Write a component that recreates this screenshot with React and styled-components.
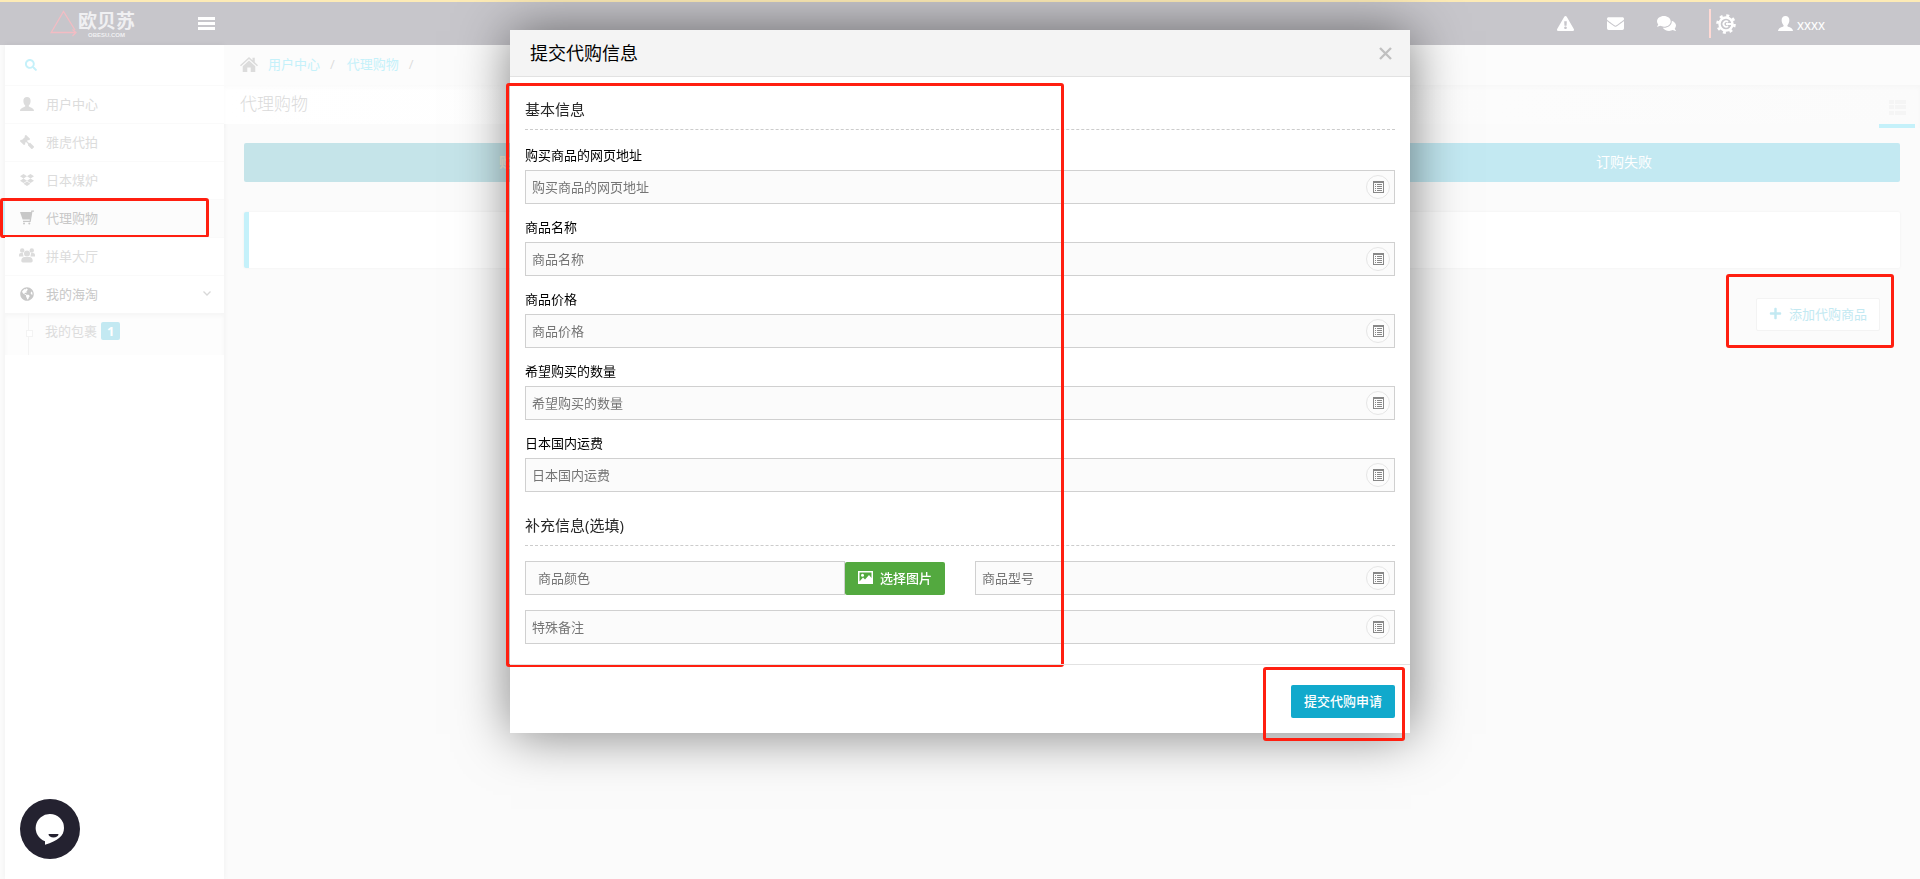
import React from 'react'
import styled, { createGlobalStyle } from 'styled-components';
import { FaSearch, FaGavel, FaDropbox, FaGlobeAmericas, FaPlus, FaExclamationTriangle, FaEnvelope, FaComments } from 'react-icons/fa';

const GlobalStyle = createGlobalStyle`
  * {
    box-sizing: border-box;
  }
  body {
    margin: 0;
    background: #fbfbfb;
    font-family: "Open Sans", "Noto Sans CJK SC", sans-serif;
    font-size: 13px;
    line-height: 20px;
    color: #262626;
  }
  a {
    text-decoration: none;
    color: inherit;
  }
  button, input {
    font: inherit;
  }
  svg {
    display: block;
    flex: none;
  }
`;

const Page = styled.div`
  min-height: 100vh;
  display: flex;
  flex-direction: column;
`;

const Header = styled.header`
  display: flex;
  align-items: center;
  height: 45px;
  padding: 0 95px 0 50px;
  border-top: 2px solid #fdebb6;
  background: #c7c6cb;
  color: #fff;
`;

const Logo = styled.a`
  display: flex;
  align-items: center;
  gap: 1px;
  margin-right: 63px;
`;

const LogoText = styled.span`
  display: flex;
  flex-direction: column;
  align-items: center;
  padding-top: 2px;
  color: #f0f0f2;
  font-weight: bold;
`;

const LogoName = styled.span`
  font-size: 19px;
  line-height: 22px;
`;

const LogoDomain = styled.span`
  font-family: "Liberation Sans", sans-serif;
  font-size: 6px;
  line-height: 7px;
`;

const IconButton = styled.button`
  display: flex;
  align-items: center;
  gap: 4px;
  padding: 0;
  border: 0;
  background: none;
  color: ${props => props.$color || 'inherit'};
  font-size: ${props => props.$size || 14}px;
  cursor: pointer;
`;

const UserName = styled.span`
  font-family: "Liberation Sans", sans-serif;
  padding-top: 2px;
`;

const HeaderIcons = styled.div`
  display: flex;
  align-items: center;
  gap: 33px;
  margin-left: auto;
`;

const Account = styled.div`
  display: flex;
  align-items: center;
  gap: 42px;
  height: 29px;
  padding-left: 5px;
  border-left: 2px solid #ffd9d4;
`;

const Columns = styled.div`
  flex: 1;
  display: flex;
`;

const Sidebar = styled.nav`
  flex: none;
  width: 219px;
  margin-left: 5px;
  background: #fff;
  box-shadow: 0 0 6px rgba(0, 0, 0, 0.05);
`;

const SearchRow = styled.div`
  display: flex;
  align-items: center;
  height: 40px;
  padding-left: 20px;
`;

const NavItem = styled.a`
  position: relative;
  display: flex;
  align-items: center;
  gap: 11px;
  height: 38px;
  padding: 0 13px 2px 14px;
  border-top: 1px solid #fafafa;
  background: ${props => props.$active ? '#fcfcfc' : '#fff'};
  box-shadow: ${props => props.$active ? '-3px 0 0 #c5f1fa' : 'none'};
  color: ${props => props.$strong ? '#c8c8c8' : '#dcdcdc'};
`;

const NavText = styled.span`
  flex: 1;
`;

const NavIcon = styled.span`
  display: flex;
  justify-content: center;
  width: 16px;
  font-size: 14px;
`;

const SubMenu = styled.div`
  height: 42px;
  margin-bottom: 20px;
  padding-left: 23px;
  background: #fdfdfd;
  box-shadow: inset 0 3px 4px rgba(0, 0, 0, 0.03);
`;

const SubItem = styled.a`
  position: relative;
  display: flex;
  gap: 4px;
  height: 42px;
  padding: 8px 0 0 16px;
  border-left: 1px solid #f3f3f3;
  color: #dcdcdc;
  &::before {
    content: "";
    position: absolute;
    left: -3px;
    top: 17px;
    width: 5px;
    height: 5px;
    border: 1px solid #f3f3f3;
    background: #fff;
  }
`;

const Count = styled.span`
  height: 18px;
  margin-top: 1px;
  padding: 0 6px;
  border-radius: 2px;
  background: #c3e9f2;
  color: #fff;
  font-weight: bold;
  line-height: 18px;
`;

const Main = styled.main`
  flex: 1;
  min-width: 0;
`;

const Breadcrumb = styled.div`
  display: flex;
  align-items: center;
  height: 40px;
  padding: 0 0 2px 16px;
  background: #fcfcfc;
  color: #dcdcdc;
`;

const Crumb = styled.a`
  margin-left: 10px;
  color: #c5f1fa;
`;

const Slash = styled.span`
  margin: 0 2px 0 10px;
`;

const TitleBar = styled.div`
  display: flex;
  align-items: flex-end;
  justify-content: space-between;
  height: 43px;
  padding: 0 5px 0 16px;
  background: linear-gradient(to right, #fff, #fbfbfb) 0 0 / 100% 39px no-repeat;
  box-shadow: inset 0 3px 4px rgba(0, 0, 0, 0.02);
`;

const Title = styled.h1`
  margin: 0 0 12px;
  color: #dadada;
  font-size: 17px;
  font-weight: 300;
  line-height: 24px;
`;

const ListTab = styled.button`
  display: flex;
  justify-content: center;
  width: 36px;
  padding: 0 0 9px;
  border: 0;
  border-bottom: 4px solid #c5f1fa;
  background: none;
  color: #f5f5f5;
`;

const Content = styled.div`
  padding: 15px 20px;
`;

const Tabs = styled.div`
  display: flex;
  height: 39px;
  margin-bottom: 30px;
  border-radius: 2px;
  overflow: hidden;
`;

const Tab = styled.button`
  flex: 1;
  padding: 0 0 2px;
  border: 0;
  background: ${props => props.$active ? '#c5e4e9' : '#c3e9f2'};
  color: ${props => props.$active ? '#f6efdc' : '#fff'};
  font-size: 14px;
  font-weight: ${props => props.$active ? 'bold' : 'normal'};
`;

const Notice = styled.div`
  height: 56px;
  margin-bottom: 30px;
  border-left: 5px solid #c5f1fa;
  border-radius: 2px;
  background: #fff;
  box-shadow: 0 0 3px rgba(0, 0, 0, 0.05);
`;

const Actions = styled.div`
  display: flex;
  justify-content: flex-end;
  padding-right: 20px;
`;

const AddButton = styled.button`
  position: relative;
  display: flex;
  align-items: center;
  gap: 7px;
  height: 33px;
  padding: 0 12px 2px;
  border: 1px solid #f3f3f3;
  border-radius: 2px;
  background: #fff;
  color: #c3e9f2;
`;

const Mark = styled.span`
  position: absolute;
  inset: ${props => props.$inset};
  border: 3px solid #ff1f10;
  border-radius: 3px;
  pointer-events: none;
`;

const Overlay = styled.div`
  position: fixed;
  inset: 0;
  display: flex;
  align-items: flex-start;
  justify-content: center;
  padding-top: 30px;
`;

const Dialog = styled.form`
  width: 900px;
  max-width: 100%;
  background: #fff;
  box-shadow: 1px 1px 50px rgba(0, 0, 0, 0.5);
`;

const DialogHeader = styled.div`
  display: flex;
  align-items: center;
  justify-content: space-between;
  height: 47px;
  padding: 0 18px 0 20px;
  border-bottom: 1px solid #e2e2e2;
  background: #f4f4f4;
`;

const DialogTitle = styled.h2`
  margin: 0;
  color: #000;
  font-size: 18px;
  font-weight: normal;
  line-height: 26px;
`;

const DialogBody = styled.div`
  position: relative;
  padding: 20px 15px;
`;

const SectionTitle = styled.h3`
  margin: 0 0 15px;
  padding-bottom: 8px;
  border-bottom: 1px dashed #ccc;
  font-size: 15px;
  font-weight: normal;
  line-height: 24px;
`;

const Fields = styled.div`
  display: flex;
  flex-direction: column;
  gap: ${props => props.$gap}px;
  margin-bottom: ${props => props.$bottom || 0}px;
`;

const FieldBlock = styled.div`
  display: flex;
  flex-direction: column;
  gap: 5px;
`;

const Label = styled.label`
  color: #000;
`;

const Pair = styled.div`
  display: grid;
  grid-template-columns: 1fr 1fr;
  gap: 30px;
`;

const Picker = styled.div`
  display: flex;
  align-items: flex-end;
`;

const InputBox = styled.div`
  display: flex;
  align-items: center;
  width: 100%;
  min-width: 0;
  height: 34px;
  padding: 0 4px 0 ${props => props.$indent || 6}px;
  border: 1px solid #d0d0d0;
  background: #fbfbfb;
`;

const Input = styled.input`
  flex: 1;
  min-width: 0;
  padding: 0;
  border: 0;
  outline: 0;
  background: none;
  color: #333;
  &::placeholder {
    color: #757575;
    opacity: 1;
  }
`;

const FillButton = styled.button`
  display: flex;
  align-items: center;
  justify-content: center;
  width: 24px;
  height: 24px;
  padding: 0;
  border: 1px solid #e6e6e6;
  border-radius: 50%;
  background: #fcfcfc;
  color: #888;
`;

const SolidButton = styled.button`
  flex: none;
  display: flex;
  align-items: center;
  gap: 7px;
  height: 33px;
  padding: 0 13px 2px;
  border: 0;
  border-radius: 2px;
  background: ${props => props.$color};
  color: #fff;
  font-weight: 500;
`;

const DialogFooter = styled.div`
  display: flex;
  justify-content: flex-end;
  position: relative;
  padding: 20px 15px 15px;
  border-top: 1px solid #e2e2e2;
`;

const ChatButton = styled.button`
  position: fixed;
  left: 20px;
  bottom: 20px;
  width: 60px;
  height: 60px;
  padding: 0;
  border: 0;
  border-radius: 50%;
  background: #242230;
`;

const UserIcon = ({ size = 14 }) => (
  <svg width={size} height={size} viewBox="0 0 14 14" fill="currentColor">
    <path d="M7 0c2.3 0 3.7 1.5 3.6 4 0 1.900-.8 3.600-1.800 4.600v1c1.600 1.100 4.900 1.200 5.200 4.400H0c.3-3.200 3.600-3.300 5.200-4.400v-1C4.200 7.600 3.400 5.900 3.400 4 3.300 1.500 4.700 0 7 0z" />
  </svg>
)

const HomeIcon = () => (
  <svg width="18" height="15" viewBox="0 0 18 15" fill="currentColor">
    <path d="M9 0l3.500 3.200V.8h2.300v4.500L18 8.200l-1 1.100L9 2.100 1 9.300 0 8.200z" />
    <path d="M9 3.500l6.300 5.700V15h-4.600v-4.500H7.300V15H2.700V9.200z" />
  </svg>
)

const GavelIcon = styled(FaGavel)`
  transform: scaleX(-1);
`;

const CartIcon = () => (
  <svg width="15" height="15" viewBox="0 0 15 15" fill="currentColor">
    <path d="M0 2h11.800L10.500 9.500H2.600z" />
    <path d="M11.300 .5H14v1.300h-1.600L10.700 12H3v-1.200h6.600z" />
    <circle cx="4" cy="13.500" r="1" />
    <circle cx="9.300" cy="13.500" r="1" />
  </svg>
)

const GroupIcon = () => (
  <svg width="16" height="15" viewBox="0 0 16 15" fill="currentColor">
    <circle cx="3.200" cy="2.500" r="2.200" />
    <circle cx="12.800" cy="2.500" r="2.200" />
    <path d="M0 8.500V7c0-1.500 1-2.200 2.200-2h1.600l.8 3.500zM16 8.500V7c0-1.500-1-2.200-2.200-2h-1.600l-.8 3.500z" />
    <circle cx="8" cy="5.500" r="3" />
    <path d="M2.300 12.500c0-2.300 1.500-3.500 3.200-3.500h5c1.700 0 3.200 1.200 3.200 3.500 0 1.200-.5 2-1.600 2H3.900c-1.100 0-1.600-.8-1.600-2z" />
  </svg>
)

const ListIcon = () => (
  <svg width="17" height="15" viewBox="0 0 17 15" fill="currentColor">
    <path d="M0 0h5v4H0zM6 0h11v4H6zM0 5h5v4H0zM6 5h11v4H6zM0 11h5v4H0zM6 11h11v4H6z" />
  </svg>
)

const FormIcon = () => (
  <svg width="11" height="12" viewBox="0 0 11 12" fill="currentColor" shapeRendering="crispEdges">
    <path d="M0 0h11v12H0zM1 2v9h9V2z" fillRule="evenodd" />
    <path d="M2 3h1v1H2zM4 3h5v1H4zM2 5h1v1H2zM4 5h5v1H4zM2 7h1v1H2zM4 7h5v1H4zM2 9h1v1H2zM4 9h5v1H4z" />
  </svg>
)

const PictureIcon = () => (
  <svg width="15" height="13" viewBox="0 0 15 13" fill="currentColor">
    <path d="M0 0h15v13H0zM1.500 1.500v9l3.500-4 2 2L11 4l2.500 3V1.500z" fillRule="evenodd" />
    <circle cx="4.500" cy="4.300" r="1.500" />
  </svg>
)

const MenuIcon = () => (
  <svg width="17" height="13" viewBox="0 0 17 13" fill="currentColor">
    <path d="M0 0h17v3H0zM0 5h17v3H0zM0 10h17v3H0z" />
  </svg>
)

const GearIcon = () => (
  <svg width="20" height="20" viewBox="0 0 20 20" fill="none" stroke="currentColor">
    <circle cx="10" cy="10" r="8.500" strokeWidth="2.600" strokeDasharray="3 3.676" />
    <circle cx="10" cy="10" r="6.500" strokeWidth="2.400" />
    <path d="M12 8a2.700 2.700 0 1 0 0 4M10 10h7" strokeWidth="1.800" />
  </svg>
)

const LogoIcon = () => (
  <svg width="27" height="27" viewBox="0 0 27 27" fill="none" stroke="#f3bcc3" strokeWidth="1.300">
    <path d="M25 20L13.500 1.500 1.200 22.500H26M22.500 26l3.500-3.500-3.500-3" />
  </svg>
)

const ChevronIcon = () => (
  <svg width="8" height="5" viewBox="0 0 8 5" fill="none" stroke="#d8d8d8" strokeWidth="1.300">
    <path d="M.5.500L4 4 7.500.500" />
  </svg>
)

const CloseIcon = () => (
  <svg width="13" height="13" viewBox="0 0 13 13" stroke="#c0c0c0" strokeWidth="2.400">
    <path d="M1 1l11 11M12 1L1 12" />
  </svg>
)

const ChatIcon = () => (
  <svg width="60" height="60" viewBox="0 0 60 60">
    <path d="M30 15a14 14 0 0 1 14 14c0 8-6 12.500-19 16.800V42.200A14 14 0 0 1 30 15z" fill="#fff" />
    <path d="M28.500 35h10a5 3.600 0 0 1-10 0z" fill="#242230" />
  </svg>
)

const navItems = [
  { text: '用户中心', icon: <UserIcon /> },
  { text: '雅虎代拍', icon: <GavelIcon /> },
  { text: '日本煤炉', icon: <FaDropbox /> },
  { text: '代理购物', icon: <CartIcon />, active: true },
  { text: '拼单大厅', icon: <GroupIcon /> },
  { text: '我的海淘', icon: <FaGlobeAmericas />, open: true },
];

const basicFields = [
  { id: 'url', text: '购买商品的网页地址' },
  { id: 'name', text: '商品名称' },
  { id: 'price', text: '商品价格' },
  { id: 'amount', text: '希望购买的数量' },
  { id: 'shipping', text: '日本国内运费' },
];

const TextField = ({ id, text }) => (
  <InputBox>
    <Input id={id} placeholder={text} aria-label={text} />
    <FillButton type="button" aria-label="填充"><FormIcon /></FillButton>
  </InputBox>
)

const App = () => {
  return (
    <Page>
      <GlobalStyle />
      <Header>
        <Logo href="#">
          <LogoIcon />
          <LogoText>
            <LogoName>欧贝苏</LogoName>
            <LogoDomain>OBESU.COM</LogoDomain>
          </LogoText>
        </Logo>
        <IconButton aria-label="菜单"><MenuIcon /></IconButton>
        <HeaderIcons>
          <IconButton $size={17} aria-label="警告"><FaExclamationTriangle /></IconButton>
          <IconButton $size={17} aria-label="邮件"><FaEnvelope /></IconButton>
          <IconButton $size={19} aria-label="消息"><FaComments /></IconButton>
          <Account>
            <IconButton aria-label="设置"><GearIcon /></IconButton>
            <IconButton><UserIcon size={15} /><UserName>xxxx</UserName></IconButton>
          </Account>
        </HeaderIcons>
      </Header>

      <Columns>
        <Sidebar>
          <SearchRow>
            <IconButton $color="#c5f1fa" $size={12} aria-label="搜索"><FaSearch /></IconButton>
          </SearchRow>
          {navItems.map(item => (
            <NavItem key={item.text} href="#" $active={item.active} $strong={item.active || item.open}>
              <NavIcon>{item.icon}</NavIcon>
              <NavText>{item.text}</NavText>
              {item.open && <ChevronIcon />}
              {item.active && <Mark $inset="-2px 15px -1px -5px" />}
            </NavItem>
          ))}
          <SubMenu>
            <SubItem href="#">我的包裹<Count>1</Count></SubItem>
          </SubMenu>
        </Sidebar>

        <Main>
          <Breadcrumb>
            <HomeIcon />
            <Crumb href="#">用户中心</Crumb><Slash>/</Slash>
            <Crumb href="#">代理购物</Crumb><Slash>/</Slash>
          </Breadcrumb>
          <TitleBar>
            <Title>代理购物</Title>
            <ListTab aria-label="列表"><ListIcon /></ListTab>
          </TitleBar>
          <Content>
            <Tabs>
              <Tab $active>购买中</Tab>
              <Tab>已订购</Tab>
              <Tab>订购失败</Tab>
            </Tabs>
            <Notice />
            <Actions>
              <AddButton>
                <FaPlus />
                添加代购商品
                <Mark $inset="-25px -15px -18px -31px" />
              </AddButton>
            </Actions>
          </Content>
        </Main>
      </Columns>

      <ChatButton aria-label="在线客服"><ChatIcon /></ChatButton>

      <Overlay>
        <Dialog onSubmit={e => e.preventDefault()}>
          <DialogHeader>
            <DialogTitle>提交代购信息</DialogTitle>
            <IconButton type="button" aria-label="关闭"><CloseIcon /></IconButton>
          </DialogHeader>
          <DialogBody>
            <SectionTitle>基本信息</SectionTitle>
            <Fields $gap={13} $bottom={21}>
              {basicFields.map(field => (
                <FieldBlock key={field.id}>
                  <Label htmlFor={field.id}>{field.text}</Label>
                  <TextField id={field.id} text={field.text} />
                </FieldBlock>
              ))}
            </Fields>
            <SectionTitle>补充信息(选填)</SectionTitle>
            <Fields $gap={15}>
              <Pair>
                <Picker>
                  <InputBox $indent={12}>
                    <Input id="color" placeholder="商品颜色" aria-label="商品颜色" />
                  </InputBox>
                  <SolidButton type="button" $color="#53a93f"><PictureIcon />选择图片</SolidButton>
                </Picker>
                <TextField id="model" text="商品型号" />
              </Pair>
              <TextField id="remark" text="特殊备注" />
            </Fields>
            <Mark $inset="6px 346px -3px -4px" />
          </DialogBody>
          <DialogFooter>
            <SolidButton $color="#11a9cc">提交代购申请</SolidButton>
            <Mark $inset="2px 5px -8px 753px" />
          </DialogFooter>
        </Dialog>
      </Overlay>
    </Page>
  )
}

export default App
